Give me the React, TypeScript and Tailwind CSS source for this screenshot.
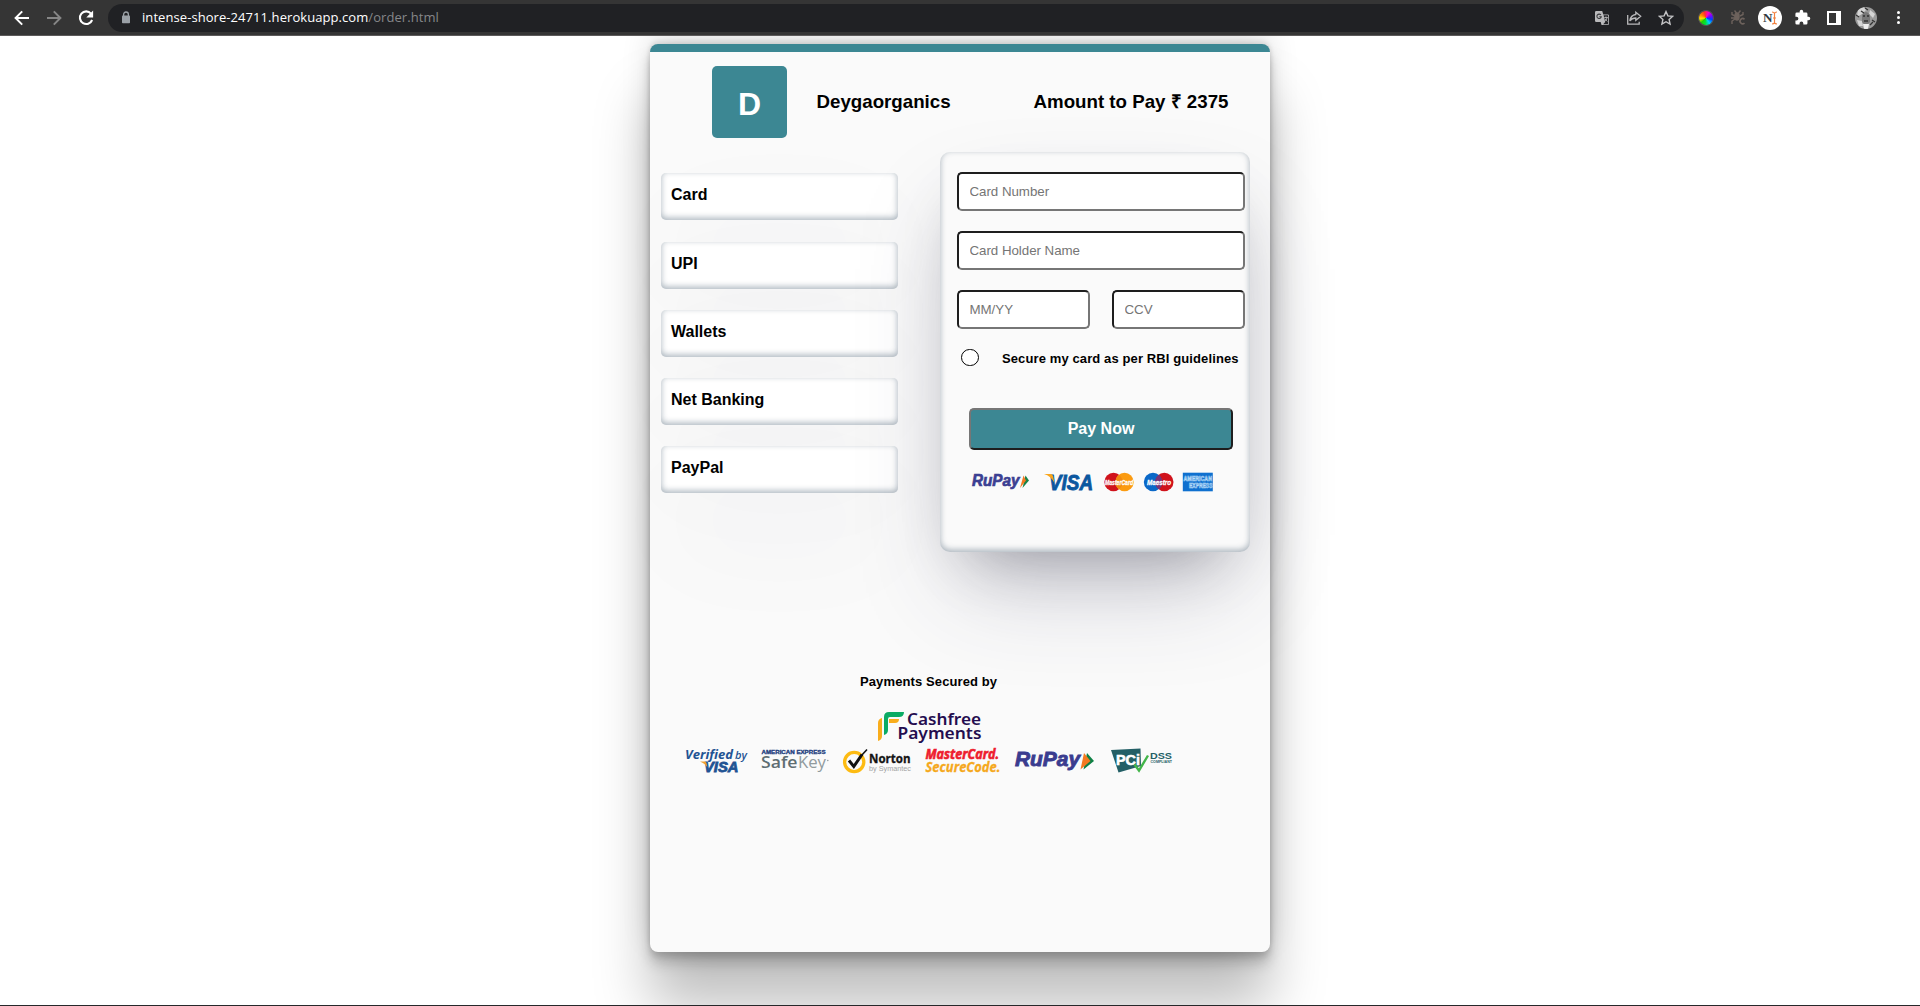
import React from "react";

const SANS = "font-['Liberation_Sans',Arial,sans-serif]";
const SOFT =
  "[box-shadow:rgba(50,50,93,0.25)_0px_50px_100px_-20px,rgba(0,0,0,0.3)_0px_30px_60px_-30px,rgba(10,37,64,0.35)_0px_-2px_6px_0px_inset]";

const LS = "Liberation Sans, Arial, sans-serif";

function Txt(p: {
  x: number;
  y: number;
  w: number;
  size: number;
  fill: string;
  children: string;
  weight?: number;
  italic?: boolean;
  family?: string;
  bold?: number;
}) {
  return (
    <text
      x={p.x}
      y={p.y}
      textLength={p.w}
      lengthAdjust="spacingAndGlyphs"
      fontSize={p.size}
      fill={p.fill}
      stroke={p.bold ? p.fill : "none"}
      strokeWidth={p.bold ?? 0}
      fontWeight={p.weight ?? 700}
      fontStyle={p.italic ? "italic" : "normal"}
      fontFamily={p.family ?? LS}
    >
      {p.children}
    </text>
  );
}

function BrowserBar() {
  return (
    <header className="flex h-9 shrink-0 items-center border-b border-[#5c5a5a] bg-[#353535]">
      <div className="flex w-[108px] items-center pl-[13px]">
        <svg width="18" height="18" viewBox="0 0 18 18" fill="none" stroke="#fff" strokeWidth="2">
          <path d="M16 9H3M9.2 2.4 2.6 9l6.6 6.6" />
        </svg>
        <svg className="ml-[14px]" width="18" height="18" viewBox="0 0 18 18" fill="none" stroke="#868686" strokeWidth="2">
          <path d="M2 9h13M8.8 2.4 15.4 9l-6.6 6.6" />
        </svg>
        <svg className="ml-[14px]" width="18" height="18" viewBox="0 0 18 18" fill="none">
          <path d="M14 4.6A6.3 6.3 0 1 0 15.1 11" stroke="#fff" strokeWidth="2.1" />
          <path d="M16.1 1.6v6.8H9.3z" fill="#fff" />
        </svg>
      </div>
      <div className="flex h-7 w-[1576px] items-center rounded-full bg-[#202124]">
        <svg className="ml-[13px]" width="10" height="13" viewBox="0 0 10 13">
          <path d="M2.6 5V3.4a2.4 2.4 0 0 1 4.8 0V5" fill="none" stroke="#9aa0a6" strokeWidth="1.3" />
          <rect x="1" y="4.6" width="8" height="7.6" rx="0.8" fill="#9aa0a6" />
        </svg>
        <div className="ml-[11px] w-[1150px] whitespace-nowrap font-['Open_Sans','Noto_Sans',sans-serif] text-[13px] leading-none tracking-[0.07px] text-[#868789]">
          <span className="text-white">intense-shore-24711.herokuapp.com</span>/order.html
        </div>
        <div className="ml-auto mr-[10px] flex items-center gap-4">
          <svg width="16" height="16" viewBox="0 0 16 16">
            <path d="M2.2 1h6l1.1 3.4H13.8q1.2 0 1.2 1.2v8.2q0 1.2-1.2 1.2H7.5L6.7 12H2.2Q1 12 1 10.8V2.2Q1 1 2.2 1z" fill="#b9b9bb" />
            <path d="M9.6 5.2h4.1q.5 0 .5.5v8q0 .5-.5.5H9.2l2-2.2z" fill="#202124" />
            <path d="M6.9 5A2.2 2.2 0 1 0 7.3 6.700H5.3" fill="none" stroke="#3a3b3e" strokeWidth="1.1" />
            <path d="M10.3 7.5h3.5M12 6.4v1.1M13 7.7c-.4 1.8-1.3 3-2.2 3.600M11.2 8.700c.5 1.200 1.300 2 2.200 2.700" fill="none" stroke="#b9b9bb" strokeWidth=".9" />
          </svg>
          <svg width="16" height="16" viewBox="0 0 16 16" fill="none" stroke="#b9b9bb" strokeWidth="1.3">
            <path d="M1.7 5v9.200h11.500v-2.500" />
            <path d="M9.800 2.200 14.700 6.300l-4.900 4V8c-2.800 0-4.500.7-6 2.800.5-3 2.200-5.800 6-6.300z" />
          </svg>
          <svg width="16" height="16" viewBox="0 0 16 16" fill="none" stroke="#c4c4c6" strokeWidth="1.4">
            <path d="m8 1.600 1.900 4.300 4.700.5-3.500 3.100 1 4.600L8 11.700l-4.100 2.400 1-4.600L1.400 6.400l4.700-.5z" />
          </svg>
        </div>
      </div>
      <div className="flex flex-1 items-center">
        <div className="ml-[15px] size-[14px] rotate-[-15deg] rounded-full bg-[conic-gradient(#ff3030,#ff00c8,#8000ff,#0040ff,#00d0ff,#00e040,#20d000,#ffe000,#ff8000,#ff3030)] ring-1 ring-[#555]" />
        <svg className="ml-[17px]" width="17" height="17" viewBox="0 0 17 17" fill="none" stroke="#6d625c" strokeWidth="1.4">
          <ellipse cx="7" cy="7.500" rx="2.800" ry="4.200" fill="#6d625c" stroke="none" />
          <path d="M4.500 1.500 6.500 4M10.500 1.500 8.500 4M2 3v2.500l3 1.500M13 3v2.500L10 7M1 9h4M2 15v-3l3-2" />
          <path d="M14.500 10.300a2.600 2.600 0 1 0 0 3.800" strokeWidth="1.700" />
        </svg>
        <div className="ml-[11px] flex size-6 items-center justify-center rounded-full bg-white">
          <svg width="20" height="16" viewBox="0 0 20 16">
            <Txt x={3} y={12} w={9.5} size={12} fill="#303840" family="Liberation Serif, serif">N</Txt>
            <path d="M12 2q2 0 2.500 1.200Q15 2 17 2M14.500 3v10M12 14q2 0 2.500-1.200Q15 14 17 14M13 8h3" fill="none" stroke="#f08040" strokeWidth="1.2" />
          </svg>
        </div>
        <svg className="ml-[12px]" width="17" height="17" viewBox="0 0 24 24" fill="#fff">
          <path d="M20.500 11H19V7a2 2 0 0 0-2-2h-4V3.500a2.500 2.500 0 0 0-5 0V5H4a2 2 0 0 0-2 2v3.800h1.500a2.700 2.700 0 0 1 0 5.400H2V20a2 2 0 0 0 2 2h3.800v-1.500a2.700 2.700 0 0 1 5.400 0V22H17a2 2 0 0 0 2-2v-4h1.500a2.500 2.500 0 0 0 0-5z" />
        </svg>
        <div className="ml-[16px] h-[14px] w-[14px] border-2 border-r-[5px] border-white" />
        <svg className="ml-[14px]" width="22" height="22" viewBox="0 0 22 22">
          <defs>
            <clipPath id="avatar"><circle cx="11" cy="11" r="11" /></clipPath>
          </defs>
          <g clipPath="url(#avatar)">
            <rect width="22" height="22" fill="#9a9a9a" />
            <path d="M3 2 9 0l2 3-4 4-5 3zM15 3l5 4-2 4-4-4zM2 13l5 1 1 5-4 0z" fill="#d4d4d4" />
            <path d="M7 8q4-6 8 0l0 7q-4 5-8 0z" fill="#777" />
            <path d="M8 9h2M12 9h2M9 14h4M1 8l3 2M17 13l3 2M10 1l3 2M6 4l3 2M15 18l3-3" stroke="#333" strokeWidth="1.3" />
            <path d="M8 17h6l-1 5H9z" fill="#eee" />
          </g>
        </svg>
        <div className="ml-[20px] flex flex-col gap-[2px]">
          <i className="size-[3px] rounded-full bg-white" />
          <i className="size-[3px] rounded-full bg-white" />
          <i className="size-[3px] rounded-full bg-white" />
        </div>
      </div>
    </header>
  );
}

function CardBrands() {
  return (
    <div className="ml-[30px] mt-[19px] flex h-[26px] items-center">
      <svg className="overflow-visible" width="60" height="22" viewBox="0 0 60 22">
        <Txt x={2} y={15} w={47.500} size={16.500} fill="#3b3f92" italic bold={0.7}>RuPay</Txt>
        <path d="m55.500 4.500 3.500 5-6.500 7.500z" fill="#17834a" />
        <path d="m53.500 4.500 2.500 5-6 7.500z" fill="#f47920" />
      </svg>
      <svg className="ml-[14px] overflow-visible" width="52" height="22" viewBox="0 0 52 22">
        <Txt x={5} y={18.500} w={44} size={21.500} fill="#0b579f" italic bold={0.9}>VISA</Txt>
        <path d="M0 3h6.500q2 0 2.500 2l1.500 7Q7 5 0 3z" fill="#f9a51a" />
      </svg>
      <svg className="ml-[8px] overflow-visible" width="32" height="20" viewBox="0 0 32 20">
        <circle cx="9.500" cy="10" r="9.200" fill="#d0121b" />
        <circle cx="20.500" cy="10" r="9.200" fill="#fb9b10" />
        <path d="M15 2.700a9.200 9.200 0 0 1 0 14.600 9.200 9.200 0 0 1 0-14.600z" fill="#f08a12" />
        <Txt x={1} y={12.600} w={28} size={7.500} fill="#fff" italic bold={0.3}>MasterCard</Txt>
      </svg>
      <svg className="ml-[8px] overflow-visible" width="32" height="20" viewBox="0 0 32 20">
        <circle cx="20.300" cy="10" r="9.200" fill="#d0121b" />
        <circle cx="9" cy="10" r="9.200" fill="#0a68c8" />
        <path d="M14.600 2.700a9.200 9.200 0 0 1 0 14.600 9.200 9.200 0 0 1 0-14.600z" fill="#7b3274" />
        <Txt x={3} y={12.600} w={24} size={7.500} fill="#fff" italic bold={0.3}>Maestro</Txt>
      </svg>
      <svg className="ml-[6px] overflow-visible" width="32" height="20" viewBox="0 0 32 20">
        <rect x="0.800" y="0.700" width="30" height="18.600" fill="#0f70cf" />
        <g fill="#0f70cf" stroke="#b9dcf8" strokeWidth=".6" fontFamily={LS} fontWeight="700" fontSize="6.500">
          <text x="1.500" y="9" textLength="28.500" lengthAdjust="spacingAndGlyphs">AMERICAN</text>
          <text x="7" y="16" textLength="23.500" lengthAdjust="spacingAndGlyphs">EXPRESS</text>
        </g>
      </svg>
    </div>
  );
}

function SecurityLogos() {
  return (
    <div className="ml-[34px] mt-[5px] flex h-[26px] items-center">
      <svg className="overflow-visible" width="64" height="26" viewBox="0 0 64 26">
        <Txt x={1} y={11} w={48} size={12.500} fill="#1f5393" italic family="Open Sans, sans-serif">Verified</Txt>
        <Txt x={51} y={11} w={12} size={11} fill="#1f5393" italic weight={600} family="Open Sans, sans-serif">by</Txt>
        <Txt x={20} y={24} w={34.500} size={14.500} fill="#1f5393" italic bold={0.8}>VISA</Txt>
        <path d="M16 13.500h5q1 0 1.500 1.500l.8 4Q21 15.500 16 13.500z" fill="#f0a030" />
      </svg>
      <svg className="ml-[12px] overflow-visible" width="70" height="26" viewBox="0 0 70 26">
        <Txt x={1.500} y={5.500} w={64} size={4.800} fill="#24407f" bold={0.3}>AMERICAN EXPRESS</Txt>
        <Txt x={1} y={20} w={36.500} size={17} fill="#5e6d72" weight={600} family="Open Sans, sans-serif">Safe</Txt>
        <Txt x={38} y={20} w={28} size={17} fill="#919b9e" weight={400} family="Open Sans, sans-serif">Key</Txt>
        <circle cx="67.800" cy="12.500" r=".8" fill="#919b9e" />
      </svg>
      <svg className="ml-[12px] overflow-visible" width="71" height="26" viewBox="0 0 71 26">
        <circle cx="12.200" cy="14" r="9.600" fill="none" stroke="#fdbb12" strokeWidth="3.300" />
        <path d="m7 12.500 4.800 6L20 6.500" fill="none" stroke="#111" strokeWidth="3" />
        <path d="m19 8 6-6.500" fill="none" stroke="#111" strokeWidth="1.600" />
        <Txt x={27} y={15} w={41.500} size={11.500} fill="#141414" bold={0.3} family="Open Sans, sans-serif">Norton</Txt>
        <Txt x={27} y={22.500} w={42} size={7} fill="#a2a2a2" weight={400}>by Symantec</Txt>
      </svg>
      <svg className="ml-[12px] overflow-visible" width="76" height="26" viewBox="0 0 76 26">
        <Txt x={0.500} y={11.300} w={73.500} size={13.500} fill="#ee1c2e" italic bold={0.6} family="Open Sans, sans-serif">MasterCard.</Txt>
        <Txt x={0.500} y={24} w={75} size={13.500} fill="#f5a81c" italic bold={0.3} family="Open Sans, sans-serif">SecureCode.</Txt>
      </svg>
      <svg className="ml-[13px] overflow-visible" width="81" height="26" viewBox="0 0 81 26">
        <Txt x={1} y={18} w={65} size={20.500} fill="#3a3c8f" italic bold={0.9}>RuPay</Txt>
        <path d="m73 5 7 8-10.500 8.500z" fill="#0d8045" />
        <path d="m70 5 6.500 8-10 8.500z" fill="#f47920" />
      </svg>
      <svg className="ml-[15px] overflow-visible" width="64" height="26" viewBox="0 0 64 26">
        <path d="M1 2 30.500.500 31 18 8.500 24.500z" fill="#235f66" />
        <Txt x={6} y={17} w={24} size={15} fill="#fff" bold={0.6}>PCi</Txt>
        <path d="m24.500 16.500 4.500 6L38 7.500" fill="none" stroke="#42b549" strokeWidth="2.400" />
        <Txt x={40} y={10.500} w={22} size={9.500} fill="#235f66">DSS</Txt>
        <Txt x={40.500} y={14.500} w={21.500} size={3.600} fill="#235f66">COMPLIANT</Txt>
      </svg>
    </div>
  );
}

const FIELD =
  "h-[39px] rounded-[5px] border-2 border-t-[#1e1e1e] border-l-[#1e1e1e] border-r-[#767676] border-b-[#767676] bg-white pl-[10.5px] text-[13.33px] tracking-[-0.04px] text-black placeholder:text-[#757575] outline-none";

export default function App() {
  return (
    <div className={`flex h-[1006px] w-[1920px] flex-col overflow-hidden bg-white text-black ${SANS}`}>
      <BrowserBar />
      <div className="flex h-[969px] justify-center overflow-hidden pt-2">
        <main className="h-[908px] w-[620px] shrink-0 rounded-[8px] border-t-8 border-[#3c8793] bg-[#fafafa] [box-shadow:rgba(0,0,0,0.25)_0px_54px_55px,rgba(0,0,0,0.12)_0px_-12px_30px,rgba(0,0,0,0.12)_0px_4px_6px,rgba(0,0,0,0.17)_0px_12px_13px,rgba(0,0,0,0.09)_0px_-3px_5px]">
          <div className="flex h-[100px] items-start pt-[14px] text-[18.72px] font-bold">
            <div className="ml-[62px] flex h-[72px] w-[75px] items-center justify-center rounded-[5px] bg-[#3c8793] pt-1 text-[32px] text-white">D</div>
            <h3 className="ml-[29.5px] mt-[25px] w-[217px] leading-[21px]">Deygaorganics</h3>
            <h3 className="mt-[25px] whitespace-nowrap leading-[21px]">Amount to Pay ₹ 2375</h3>
          </div>
          <div className="flex h-[500px] items-start">
            <nav className="ml-[11px] mt-[21px] flex w-[237px] flex-col gap-[21px]">
              {["Card", "UPI", "Wallets", "Net Banking", "PayPal"].map((m) => (
                <div key={m} className={`h-[47px] rounded-[5px] bg-white pl-[10px] pt-[12px] text-[16px] font-bold leading-[19px] first:mb-px ${SOFT}`}>
                  {m}
                </div>
              ))}
            </nav>
            <section className={`ml-[42px] h-[400px] w-[310px] rounded-[10px] bg-[#fafafa] pt-5 ${SOFT}`}>
              <div className="ml-[17px] flex w-[288px] flex-col gap-5">
                <input className={FIELD} placeholder="Card Number" />
                <input className={FIELD} placeholder="Card Holder Name" />
                <div className="flex justify-between">
                  <input className={`w-[133px] ${FIELD}`} placeholder="MM/YY" />
                  <input className={`w-[133px] ${FIELD}`} placeholder="CCV" />
                </div>
              </div>
              <div className="ml-[21px] mt-5 flex h-[18px] items-center">
                <span className="mb-px h-[17px] w-[18px] rounded-full border border-black bg-white" />
                <span className="ml-[23px] mt-[2px] whitespace-nowrap text-[13px] font-bold tracking-[0.11px]">Secure my card as per RBI guidelines</span>
              </div>
              <button className="ml-[29px] mt-[41px] block h-[42px] w-[264px] rounded-[5px] border-2 border-t-[#767676] border-l-[#767676] border-r-[#1e1e1e] border-b-[#1e1e1e] bg-[#3c8793] text-[16px] font-bold text-white">
                Pay Now
              </button>
              <CardBrands />
            </section>
          </div>
          <div className="flex flex-col">
            <p className="ml-[210px] mt-[22px] text-[13px] font-bold leading-[16px] tracking-[0.11px]">Payments Secured by</p>
            <svg className="ml-[226px] mt-[19px] overflow-visible" width="110" height="34" viewBox="0 0 110 34">
              <path d="M2 32V14q0-4 4-5v18q0 4-4 5z" fill="#f9ad1c" />
              <path d="M8 26V8q0-5 5-5h15q0 5-5 5h-9q-2 0-2 2v11q0 4-4 5z" fill="#0bab64" />
              <path d="M13 10h10q0 4-4 4h-6z" fill="#f9ad1c" />
              <Txt x={31} y={16} w={74} size={16.500} fill="#240d4f" weight={600} family="Noto Sans, sans-serif">Cashfree</Txt>
              <Txt x={21.500} y={29.500} w={84} size={16.500} fill="#240d4f" weight={600} family="Noto Sans, sans-serif">Payments</Txt>
            </svg>
            <SecurityLogos />
          </div>
        </main>
      </div>
      <div className="h-px shrink-0 bg-[#27282a]" />
    </div>
  );
}
